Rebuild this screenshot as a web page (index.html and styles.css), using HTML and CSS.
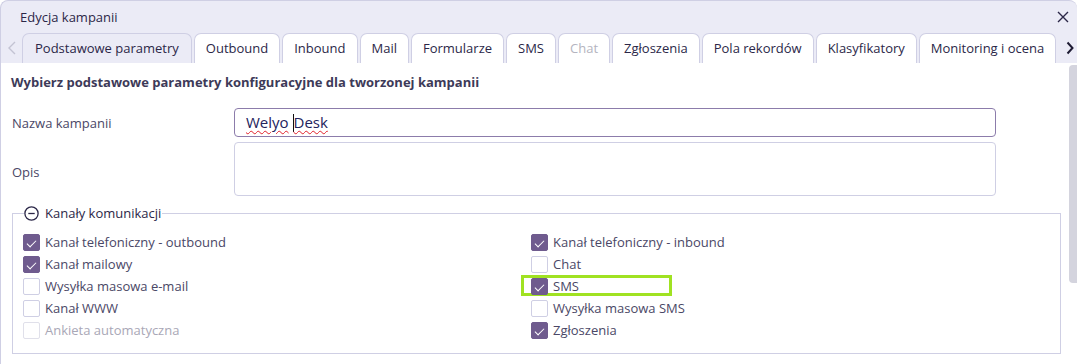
FILE: index.html
```html
<!DOCTYPE html>
<html lang="pl">

<head>
    <meta charset="UTF-8" />
    <meta name="viewport" content="width=device-width, initial-scale=1.0" />
    <title>Edycja kampanii</title>
    <link rel="stylesheet" href="styles.css">
</head>

<body>
    <div class="dialog">
        <div class="dialog-title">
            <span>Edycja kampanii</span>
            <svg class="close" width="12" height="12" viewBox="0 0 12 12">
                <path d="M1 1 L11 11 M11 1 L1 11" stroke="#2b2748" stroke-width="1.4" fill="none" />
            </svg>
        </div>
        <div class="tabs-bar">
            <span class="arrow arrow-left">
                <svg width="8" height="14" viewBox="0 0 8 14">
                    <polyline points="7,1 1,7 7,13" stroke="#c3c3d3" stroke-width="1.4" fill="none" />
                </svg>
            </span>
            <ul class="tab-title">
                <li class="current wide">Podstawowe parametry</li>
                <li>Outbound</li>
                <li>Inbound</li>
                <li>Mail</li>
                <li>Formularze</li>
                <li>SMS</li>
                <li class="disabled">Chat</li>
                <li>Zgłoszenia</li>
                <li>Pola rekordów</li>
                <li>Klasyfikatory</li>
                <li>Monitoring i ocena</li>
            </ul>
            <span class="arrow arrow-right">
                <svg width="8" height="14" viewBox="0 0 8 14">
                    <polyline points="1.5,1.5 6.5,7 1.5,12.5" stroke="#1e1b33" stroke-width="2" fill="none" />
                </svg>
            </span>
        </div>
        <div class="dialog-body">
            <div class="content">
                <h3 class="section-head">Wybierz podstawowe parametry konfiguracyjne dla tworzonej kampanii</h3>
                <div class="form-row">
                    <label class="form-label">Nazwa kampanii</label>
                    <div class="text-input focused">
                        <span class="misspelled">Welyo</span> <span class="caret"></span><span class="misspelled">Desk</span>
                    </div>
                </div>
                <div class="form-row">
                    <label class="form-label opis">Opis</label>
                    <div class="text-area"></div>
                </div>
                <fieldset class="channels">
                    <legend>
                        <svg width="15" height="15" viewBox="0 0 15 15">
                            <circle cx="7.5" cy="7.5" r="6.6" stroke="#2b2748" stroke-width="1.3" fill="none" />
                            <path d="M4.3 7.5 H10.7" stroke="#2b2748" stroke-width="1.3" />
                        </svg>
                        Kanały komunikacji
                    </legend>
                    <div class="channel-grid">
                        <div class="channel-col">
                            <div class="check-row"><span class="box checked"></span>Kanał telefoniczny - outbound</div>
                            <div class="check-row"><span class="box checked"></span>Kanał mailowy</div>
                            <div class="check-row"><span class="box"></span>Wysyłka masowa e-mail</div>
                            <div class="check-row"><span class="box"></span>Kanał WWW</div>
                            <div class="check-row disabled"><span class="box"></span>Ankieta automatyczna</div>
                        </div>
                        <div class="channel-col">
                            <div class="check-row"><span class="box checked"></span>Kanał telefoniczny - inbound</div>
                            <div class="check-row"><span class="box"></span>Chat</div>
                            <div class="check-row marked"><span class="box checked"></span>SMS</div>
                            <div class="check-row"><span class="box"></span>Wysyłka masowa SMS</div>
                            <div class="check-row"><span class="box checked"></span>Zgłoszenia</div>
                        </div>
                    </div>
                </fieldset>
            </div>
            <div class="scrollbar"><div class="thumb"></div></div>
        </div>
    </div>
</body>

</html>
```

FILE: styles.css
```css
* {
    margin: 0;
    padding: 0;
    box-sizing: border-box;
}

body {
    font-family: "Open Sans", "DejaVu Sans", sans-serif;
    font-size: 13px;
    color: #3d3a58;
    background: #fff;
    overflow: hidden;
}

.dialog {
    width: 1077px;
    height: 420px;
    border: 1px solid #cfcfe4;
    border-right: none;
    border-radius: 8px 8px 0 0;
    background: #ebebf6;
}

.dialog-title {
    height: 32px;
    display: flex;
    align-items: center;
    justify-content: space-between;
    padding: 0 8px 0 19px;
    color: #2b2748;
}

.tabs-bar {
    height: 30px;
    display: flex;
    align-items: flex-end;
}

.arrow {
    flex-shrink: 0;
    width: 21px;
    height: 30px;
    display: flex;
    align-items: center;
    justify-content: center;
}

.arrow-right {
    width: 14px;
}

.tab-title {
    flex: 1;
    display: flex;
    gap: 2px;
    list-style-type: none;
    height: 30px;
    overflow: hidden;
}

.tab-title li {
    flex-shrink: 0;
    height: 30px;
    line-height: 29px;
    padding: 0 11px;
    background: #fff;
    border: 1px solid #cfcfe4;
    border-bottom: none;
    border-radius: 7px 7px 0 0;
    color: #2b2748;
    white-space: nowrap;
}

.tab-title li.wide {
    padding: 0 12px;
}

.tab-title li.current {
    background: #ebebf6;
}

.tab-title li.disabled {
    color: #b4b4c0;
}

.dialog-body {
    background: #fff;
    display: flex;
    height: 360px;
}

.content {
    width: 1068px;
    padding: 10px 8px 0 10px;
}

.section-head {
    font-size: 13px;
    font-weight: bold;
    color: #3d3a58;
    line-height: 18px;
}

.form-row {
    display: flex;
    align-items: center;
}

.form-row:nth-of-type(1) {
    margin-top: 17px;
}

.form-row + .form-row {
    margin-top: 5px;
}

.form-label {
    width: 223px;
    padding-left: 1px;
    color: #4a4766;
}

.form-label.opis {
    padding-top: 6px;
}

.text-input {
    width: 762px;
    height: 29px;
    border: 1px solid #cfcfe4;
    border-radius: 4px;
    padding-left: 11px;
    font-size: 15px;
    line-height: 27px;
    color: #23235c;
}

.text-input.focused {
    border-color: #8c7cab;
}

.misspelled {
    text-decoration: underline wavy #e0202a;
    text-decoration-thickness: 1px;
    text-underline-offset: 2px;
}

.caret {
    display: inline-block;
    width: 1px;
    height: 18px;
    background: #111;
    vertical-align: -4px;
}

.text-area {
    width: 762px;
    height: 54px;
    border: 1px solid #cfcfe4;
    border-radius: 4px;
}

.channels {
    margin: 9px 0 0 1px;
    width: 1049px;
    height: 149px;
    border: 1px solid #cfcfe4;
    padding: 10px 0 0 10px;
}

.channels legend {
    display: flex;
    align-items: center;
    gap: 6px;
    margin-left: 1px;
    padding: 0 1px 0 0;
    color: #2b2748;
    line-height: 16px;
}

.channel-grid {
    display: grid;
    grid-template-columns: 508px 1fr;
}

.check-row {
    height: 22px;
    display: flex;
    align-items: center;
    gap: 5px;
    color: #4a4766;
}

.box {
    width: 17px;
    height: 17px;
    border: 1px solid #cfcfe4;
    border-radius: 2px;
    background: #fff;
    position: relative;
}

.box.checked {
    background: #6f5b8e;
    border-color: #6f5b8e;
}

.box.checked::after {
    content: "";
    position: absolute;
    left: 5px;
    top: 3px;
    width: 4px;
    height: 8px;
    border-right: 1.5px solid #fff;
    border-bottom: 1.5px solid #fff;
    transform: rotate(45deg);
}

.check-row.disabled {
    color: #a9a7b6;
}

.check-row.disabled .box {
    border-color: #e0e0ea;
}

.check-row.marked {
    position: relative;
}

.check-row.marked::before {
    content: "";
    box-sizing: border-box;
    position: absolute;
    left: -10px;
    top: 0;
    width: 151px;
    height: 21px;
    border: 3px solid #a0e222;
}

.scrollbar {
    width: 9px;
    padding-top: 2px;
}

.thumb {
    height: 218px;
    background: #d4d4de;
    border-radius: 4px 0 0 4px;
}
```
